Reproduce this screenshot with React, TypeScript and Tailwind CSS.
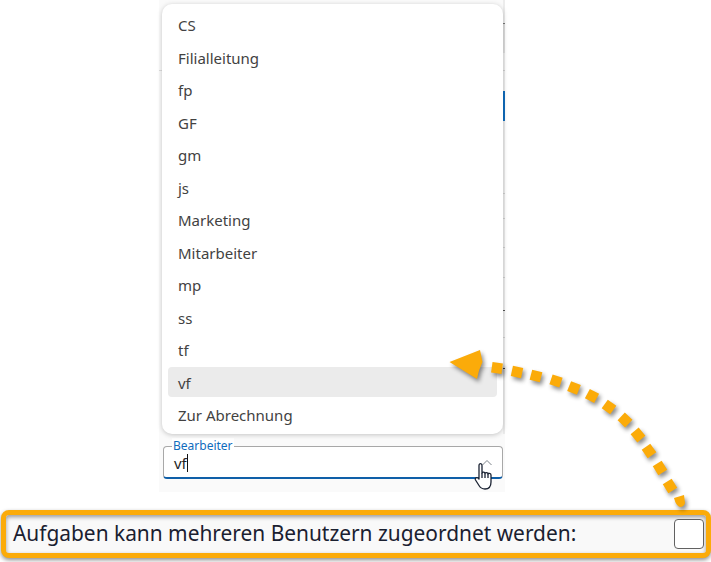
import React from 'react';

const roles = ['CS', 'Filialleitung', 'fp', 'GF', 'gm', 'js', 'Marketing', 'Mitarbeiter', 'mp', 'ss', 'tf', 'vf', 'Zur Abrechnung'];

// what shows of the page behind the open list, top to bottom
const edge = [
  'h-[23px] bg-[#ececec]',
  'h-px bg-[#777777]',
  'h-[29px] bg-[#dcdcdc]',
  'h-[17px] bg-[#ececec]',
  'h-px bg-[#cfcfcf]',
  'h-[20px] bg-[#ececec]',
  'h-[30px] bg-[#0f6cbd]',
  'h-[72px] bg-[#ececec]',
  'h-px bg-[#cfcfcf]',
  'h-[24px] bg-[#ececec]',
  'h-px bg-[#cfcfcf]',
  'h-[28px] bg-[#ececec]',
  'h-px bg-[#cfcfcf]',
  'h-[29px] bg-[#ececec]',
  'h-px bg-[#cfcfcf]',
  'h-[32px] bg-[#ececec]',
  'h-px bg-[#555555]',
  'h-[26px] bg-[#ececec]',
  'h-px bg-[#cfcfcf]',
  'h-[30px] bg-[#ececec]',
  'h-px bg-[#444444]',
  'flex-1 bg-[#ececec]',
];

const dots: [number, number, number][] = [
  [497, 368, 8],
  [517, 372, 12],
  [536, 376, 14],
  [556, 381, 18],
  [574, 388, 22],
  [592, 396, 28],
  [609, 407, 36],
  [625, 420, 44],
  [638, 435, 50],
  [649, 451, 55],
  [660, 468, 58],
  [670, 486, 58],
];

const font = "font-['Noto_Sans','Open_Sans',sans-serif]";

const App: React.FC = () => {
  return (
    <div className={`relative w-[711px] h-[562px] bg-white overflow-hidden flex flex-col ${font}`}>
      {/* Dropdown with its field */}
      <div className="ml-[159px] w-[346px] h-[492px] bg-[#fafafa] flex flex-col">
        <div className="h-[434px] flex">
          <div className="w-[3px] pt-[70px]">
            <div className="h-px bg-[#dddddd]" />
          </div>
          <div className="w-[341px] h-[430px] mt-1 bg-white rounded-[10px] shadow-[0_1px_5px_rgba(0,0,0,0.22)] px-[6px] pt-[5.95px] z-10">
            {roles.map((role) => (
              <div
                key={role}
                className={`h-[30px] mb-[2.5px] pl-[10px] pt-[1px] flex items-center text-[15px] text-[#424242] rounded-[4px] ${
                  role === 'vf' ? 'bg-[#ebebeb]' : ''
                }`}
              >
                {role}
              </div>
            ))}
          </div>
          <div className="w-[2px] flex flex-col">
            {edge.map((segment, i) => (
              <div key={i} className={segment} />
            ))}
          </div>
        </div>
        <div className="relative mt-3 ml-1 w-[340px] h-[33px] bg-white rounded-[4px] border border-[#a8a8a8] border-b-2 border-b-[#0f5fa8] pl-[10px] pr-[9px] flex justify-between">
          <span className="absolute -top-[9px] left-[8px] bg-white px-px text-[12px] leading-[16px] text-[#0f6cbd]">Bearbeiter</span>
          <div className="pt-[5px] self-start flex items-center text-[15px] leading-[22px] text-[#242424]">
            <span>vf</span>
            <span className="w-px h-[18px] bg-[#111111]" />
          </div>
          <svg className="mt-[12px]" width="12" height="8" viewBox="0 0 12 8" fill="none">
            <path d="M1.5 6 6 1.5 10.5 6" stroke="#7d838a" strokeWidth="1" />
          </svg>
        </div>
      </div>

      {/* Highlighted option */}
      <div className="mt-[18px] ml-px h-[48px] bg-[#f9f9f9] rounded-[8px] border-[5px] border-[#fbab09] shadow-[0_2px_4px_rgba(0,0,0,0.45),inset_0_2px_4px_rgba(0,0,0,0.4)] flex items-center justify-between pl-[7px] pr-[2px]">
        <span className="text-[20.9px] text-[#1a2030] whitespace-nowrap">Aufgaben kann mehreren Benutzern zugeordnet werden:</span>
        <div className="w-[30px] h-[30px] bg-white rounded-[4px] border border-[#616161]" />
      </div>

      {/* Annotation arrow */}
      <svg className="absolute inset-0 z-20 drop-shadow-[2px_3px_2px_rgba(0,0,0,0.45)]" width="711" height="562" viewBox="0 0 711 562">
        <path d="M449.5 362 480 350 482.5 362 479 370.5 477 379Z" fill="#fbab09" />
        {dots.map(([x, y, angle]) => (
          <rect key={x} x={x - 5.25} y={y - 5.25} width="10.5" height="10.5" fill="#fbab09" transform={`rotate(${angle} ${x} ${y})`} />
        ))}
        <path d="M674 498 684 495 685 503Q684 507 680 507 676 506 674 498Z" fill="#fbab09" />
      </svg>

      {/* Mouse pointer */}
      <svg className="absolute left-[474px] top-[462px] z-20" width="20" height="28" viewBox="0 0 20 28" fill="white" stroke="#1b2333" strokeWidth="1.3" strokeLinejoin="round">
        <path d="M5 15V3.5C5 1 8 1 8 3.5V11C8 9.8 11 9.8 11 11.5 11 10.3 14 10.3 14 12 14 11 17 11 17 13V20C17 24 15 27 11 27 8 27 6.5 26 5 23.5L1.5 18C0.5 16 3 14.5 5 17Z" />
        <path d="M8 11V16M11 11.5V16M14 12V16" fill="none" />
      </svg>
    </div>
  );
};

export default App;
